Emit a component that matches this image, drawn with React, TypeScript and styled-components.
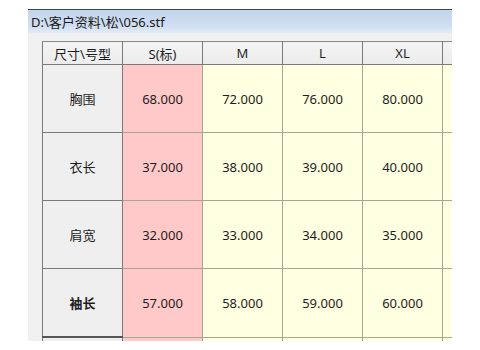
import styled, { createGlobalStyle } from "styled-components";

const GlobalStyle = createGlobalStyle`
  body {
    margin: 0;
    background: #ffffff;
    font-family: "Noto Sans", "Noto Sans CJK SC", sans-serif;
  }
`;

const sizes = ["S(标)", "M", "L", "XL"];

const rows = [
  { name: "胸围", values: ["68.000", "72.000", "76.000", "80.000"] },
  { name: "衣长", values: ["37.000", "38.000", "39.000", "40.000"] },
  { name: "肩宽", values: ["32.000", "33.000", "34.000", "35.000"] },
  { name: "袖长", values: ["57.000", "58.000", "59.000", "60.000"], active: true },
  { name: "", values: ["", "", "", ""] },
];

export default function App() {
  return (
    <>
      <GlobalStyle />
      <Page>
        <Window>
          <TitleBar>D:\客户资料\松\056.stf</TitleBar>
          <Client>
            <Grid>
              <colgroup>
                {Array.from({ length: 6 }).map((_, i) => (
                  <Col key={i} />
                ))}
              </colgroup>
              <thead>
                <tr>
                  <HeadCell>尺寸\号型</HeadCell>
                  {sizes.map((s) => (
                    <HeadCell key={s}>{s}</HeadCell>
                  ))}
                  <HeadCell />
                </tr>
              </thead>
              <tbody>
                {rows.map((row, i) => (
                  <tr key={i}>
                    <RowHead $active={row.active}>{row.name}</RowHead>
                    {row.values.map((v, j) => (
                      <Cell key={j} $base={j === 0}>
                        {v}
                      </Cell>
                    ))}
                    <Cell />
                  </tr>
                ))}
              </tbody>
            </Grid>
          </Client>
        </Window>
      </Page>
    </>
  );
}

const Page = styled.div`
  padding: 9px 0 0 28px;
`;

const Window = styled.div`
  width: 424px;
  height: 332px;
  overflow: hidden;
  display: flex;
  flex-direction: column;
  background: #f0f0f0;
`;

const TitleBar = styled.div`
  height: 23px;
  flex-shrink: 0;
  border-top: 1px solid #3c4650;
  padding-left: 3px;
  display: flex;
  align-items: center;
  font-size: 13px;
  color: #1a1a1a;
  background: linear-gradient(#c3d5ec, #d0def0 70%, #e2ecf7);
`;

const Client = styled.div`
  flex: 1;
  padding: 8px 0 0 14px;
  overflow: hidden;
`;

const Grid = styled.table`
  width: 481px;
  border-collapse: collapse;
  table-layout: fixed;
  border-left: 1px solid #6a6a6a;
  font-size: 13px;
  color: #1e1e1e;
`;

const Col = styled.col`
  width: 80px;
`;

const HeadCell = styled.th`
  height: 22px;
  padding: 0;
  font-weight: normal;
  text-align: center;
  background: linear-gradient(#f4f4f4, #ececec);
  border: 1px solid #7a7a7a;
  border-top-color: #8a8a8a;
`;

const RowHead = styled.td<{ $active?: boolean }>`
  height: 67px;
  padding: 0;
  text-align: center;
  background: #efefef;
  font-weight: ${(p) => (p.$active ? "bold" : "normal")};
  border: 1px solid #7a7a7a;
  border-bottom: ${(p) => (p.$active ? "2px solid #555" : "1px solid #7a7a7a")};
`;

const Cell = styled.td<{ $base?: boolean }>`
  padding: 0;
  text-align: center;
  background: ${(p) => (p.$base ? "#ffc9ca" : "#ffffe1")};
  border: 1px solid #a8a690;
`;
